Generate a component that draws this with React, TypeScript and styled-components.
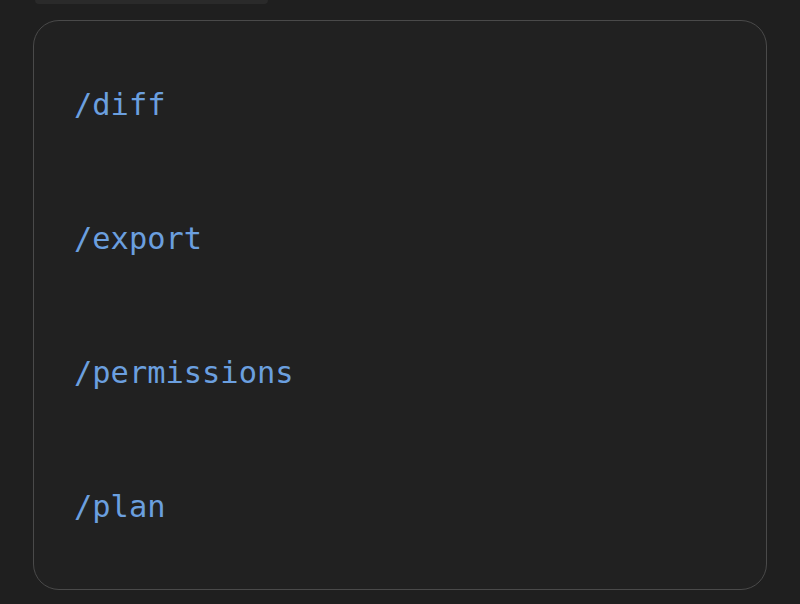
import React from "react";
import styled, { createGlobalStyle } from "styled-components";

const Global = createGlobalStyle`
  html, body { margin: 0; padding: 0; background: #1f1f1f; }
  body { width: 800px; height: 604px; overflow: hidden; }
`;

const Page = styled.div`
  width: 800px;
  height: 604px;
  display: flex;
  flex-direction: column;
  box-sizing: border-box;
  padding: 0 33px;
  background: #1f1f1f;
`;

const Tab = styled.div`
  width: 233px;
  height: 4px;
  margin-left: 2px;
  background: #2a2a2a;
  border-radius: 0 0 4px 4px;
`;

const Card = styled.div`
  margin-top: 16px;
  height: 570px;
  box-sizing: border-box;
  border: 1px solid #4a4a4a;
  border-radius: 26px;
  background: #212121;
  padding: 66px 40px 0;
  display: flex;
  flex-direction: column;
  gap: 98px;
`;

const Command = styled.div`
  font-family: "DejaVu Sans Mono", "Liberation Mono", monospace;
  font-size: 30.4px;
  line-height: 36px;
  color: #6b9fdf;
`;

const commands = ["/diff", "/export", "/permissions", "/plan"];

export default function App() {
  return (
    <>
      <Global />
      <Page>
        <Tab />
        <Card>
          {commands.map((c) => (
            <Command key={c}>{c}</Command>
          ))}
        </Card>
      </Page>
    </>
  );
}
